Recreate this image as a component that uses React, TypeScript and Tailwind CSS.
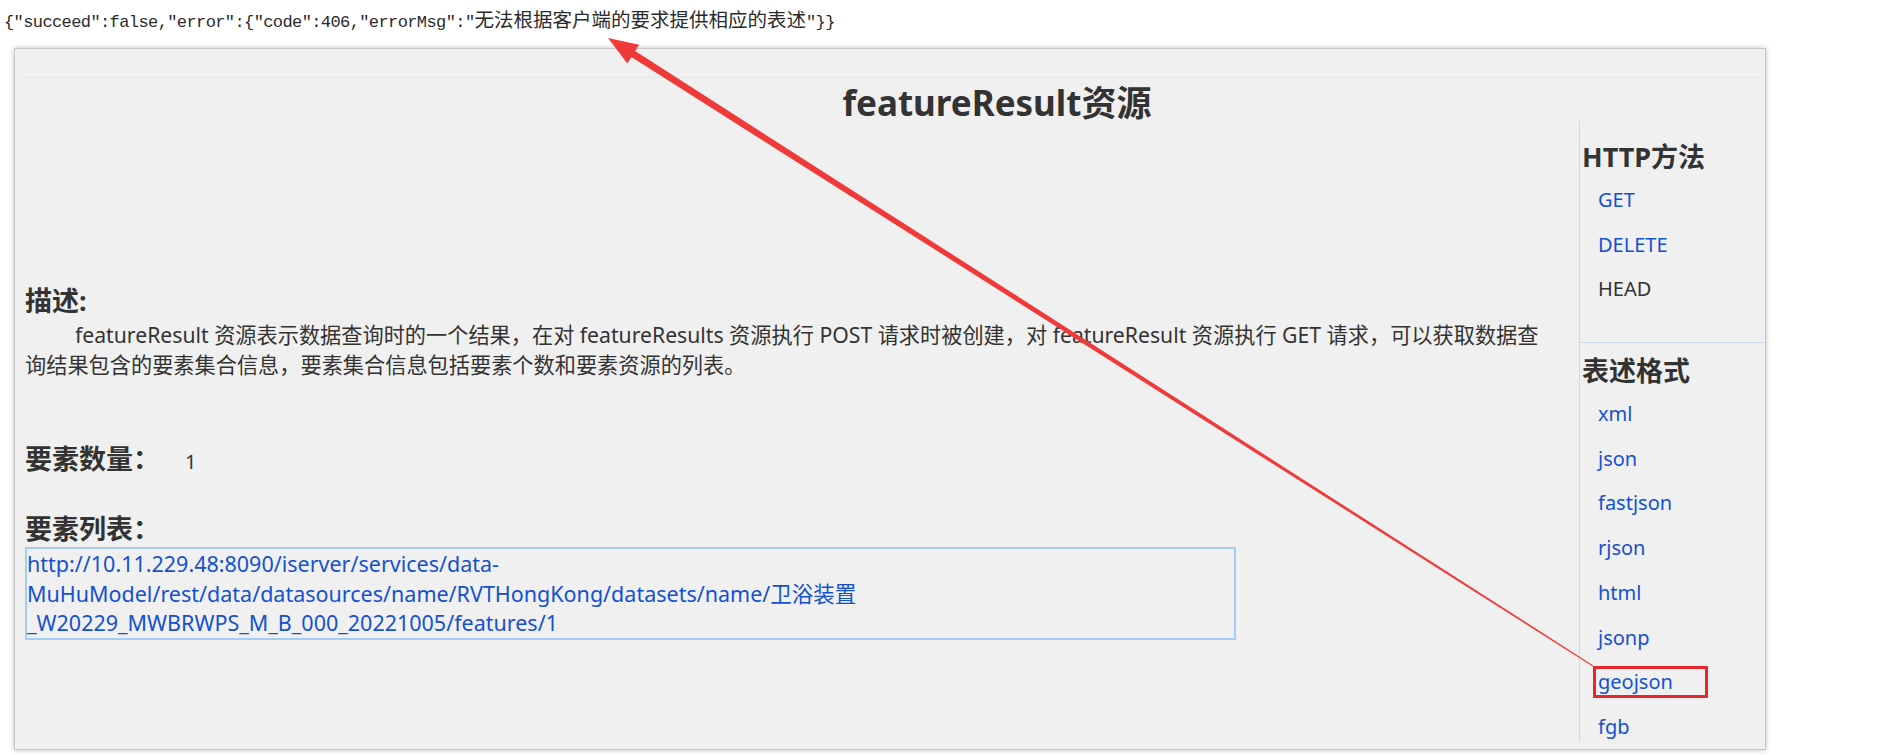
import React from 'react';

const sans = { fontFamily: '"Noto Sans", "Noto Sans CJK SC", sans-serif' };

const methods = [
  { label: 'GET', link: true },
  { label: 'DELETE', link: true },
  { label: 'HEAD', link: false },
];

const formats = ['xml', 'json', 'fastjson', 'rjson', 'html', 'jsonp', 'geojson', 'fgb'];

const SideItem = ({ label, link, boxed }: { label: string; link: boolean; boxed?: boolean }) => (
  <li className={`relative h-[44.7px] shrink-0 pl-[18px] text-[20px] leading-[44.7px] ${link ? 'text-[#1450d2]' : 'text-[#333333]'}`}>
    {label}
    {boxed && (
      <span className="pointer-events-none absolute left-[13px] top-[6px] h-[32px] w-[115px] border-[3px] border-[#e8262b]" />
    )}
  </li>
);

export default function App() {
  return (
    <div className="relative h-[755px] w-full overflow-hidden bg-white" style={sans}>
      {/* raw response line */}
      <div
        className="h-[48px] whitespace-nowrap pl-[4px] pt-[9px] text-[17px] leading-[20px] tracking-[-0.6px] text-[#2b2b2b]"
        style={{ fontFamily: '"Liberation Mono", monospace' }}
      >
        {'{"succeed":false,"error":{"code":406,"errorMsg":"'}
        <span className="text-[19.5px] tracking-normal" style={{ fontFamily: '"Noto Sans CJK SC", sans-serif' }}>
          无法根据客户端的要求提供相应的表述
        </span>
        {'"}}'}
      </div>

      {/* resource panel */}
      <div className="ml-[14px] flex h-[702px] w-[1752px] flex-col border border-[#c6c6c6] bg-[#f0f0f0] pb-[8px] shadow-[0_0_5px_rgba(0,0,0,0.25)]">
        <div className="ml-[8px] h-[29px] shrink-0 border-b border-[#e2e8f3]" />
        <div className="h-[43px] shrink-0 pl-[214px] pt-[3px] text-center text-[35px] font-bold leading-[43px] text-[#333333]">
          featureResult资源
        </div>

        <div className="flex min-h-0 flex-1">
          <div className="flex-1 pl-[10px] text-[#333333]">
            <h3 className="mt-[165px] text-[27px] font-bold leading-[30px]">描述:</h3>
            <p className="mt-[4px] indent-[50px] text-[21.2px] leading-[30px]">
              featureResult 资源表示数据查询时的一个结果，在对 featureResults 资源执行 POST 请求时被创建，对 featureResult 资源执行 GET 请求，可以获取数据查
              <br />
              询结果包含的要素集合信息，要素集合信息包括要素个数和要素资源的列表。
            </p>

            <div className="mt-[64px] flex items-baseline leading-[30px]">
              <h3 className="text-[27px] font-bold">要素数量：</h3>
              <span className="ml-[25px] text-[20px]">1</span>
            </div>

            <h3 className="mt-[37px] text-[27px] font-bold leading-[30px]">要素列表：</h3>
            <div className="mt-[3px] w-[1211px] border-2 border-[#a3ccf8] text-[21.5px] leading-[29.5px] text-[#1450d2]">
              http://10.11.229.48:8090/iserver/services/data-
              <br />
              MuHuModel/rest/data/datasources/name/RVTHongKong/datasets/name/卫浴装置
              <br />
              _W20229_MWBRWPS_M_B_000_20221005/features/1
            </div>
          </div>

          <aside className="flex w-[186px] flex-col border-l border-[#cbd9f1] text-[#333333]">
            <div className="shrink-0 pt-[21px] pb-[30px]">
              <h3 className="mb-[6px] pl-[2px] text-[27px] font-bold leading-[30px]">HTTP方法</h3>
              <ul>
                {methods.map(m => (
                  <SideItem key={m.label} label={m.label} link={m.link} />
                ))}
              </ul>
            </div>
            <div className="shrink-0 border-t border-[#cbd9f1] pt-[13px]">
              <h3 className="mb-[6px] pl-[2px] text-[27px] font-bold leading-[30px]">表述格式</h3>
              <ul>
                {formats.map(f => (
                  <SideItem key={f} label={f} link boxed={f === 'geojson'} />
                ))}
              </ul>
            </div>
          </aside>
        </div>
      </div>

      {/* annotation arrow */}
      <svg className="pointer-events-none absolute left-0 top-0" width="1878" height="755" viewBox="0 0 1878 755">
        <polygon
          points="608,38 639.2,44.8 635.2,51.1 1593.3,665.5 1592.7,666.5 631.4,57.1 627.4,63.4"
          fill="#f03a3a"
        />
      </svg>
    </div>
  );
}
